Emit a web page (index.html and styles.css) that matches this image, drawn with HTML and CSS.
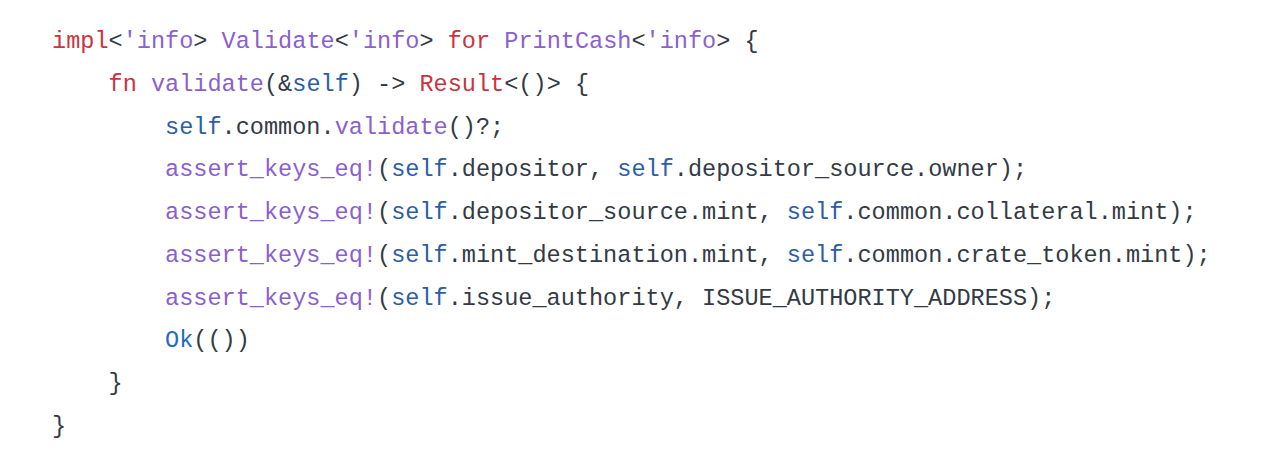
FILE: index.html
```html
<!DOCTYPE html>
<html>
<head>
<meta charset="utf-8">
<link rel="stylesheet" href="styles.css">
</head>
<body>
<pre class="code"><code class="src"><span class="kw">impl</span>&lt;<span class="fn">'info</span>&gt; <span class="fn">Validate</span>&lt;<span class="fn">'info</span>&gt; <span class="kw">for</span> <span class="fn">PrintCash</span>&lt;<span class="fn">'info</span>&gt; {
    <span class="kw">fn</span> <span class="fn">validate</span>(&amp;<span class="sf">self</span>) -&gt; <span class="kw">Result</span>&lt;()&gt; {
        <span class="sf">self</span>.common.<span class="fn">validate</span>()?;
        <span class="fn">assert_keys_eq!</span>(<span class="sf">self</span>.depositor, <span class="sf">self</span>.depositor_source.owner);
        <span class="fn">assert_keys_eq!</span>(<span class="sf">self</span>.depositor_source.mint, <span class="sf">self</span>.common.collateral.mint);
        <span class="fn">assert_keys_eq!</span>(<span class="sf">self</span>.mint_destination.mint, <span class="sf">self</span>.common.crate_token.mint);
        <span class="fn">assert_keys_eq!</span>(<span class="sf">self</span>.issue_authority, ISSUE_AUTHORITY_ADDRESS);
        <span class="ok">Ok</span>(())
    }
}</code></pre>
</body>
</html>
```
FILE: styles.css
```css
html, body {
  margin: 0;
  padding: 0;
  background: #ffffff;
}
.code {
  margin: 0;
  padding: 21px 0 0 52px;
  font-family: "Liberation Mono", monospace;
  font-size: 23.55px;
  line-height: 42.75px;
  color: #333a44;
}
.src {
  font-family: "Liberation Mono", monospace;
  font-size: 23.55px;
  line-height: 42.75px;
}
.kw { color: #cc3340; }
.fn { color: #8a5fd0; }
.sf { color: #2c5ea6; }
.ok { color: #1e6cbf; }
```
